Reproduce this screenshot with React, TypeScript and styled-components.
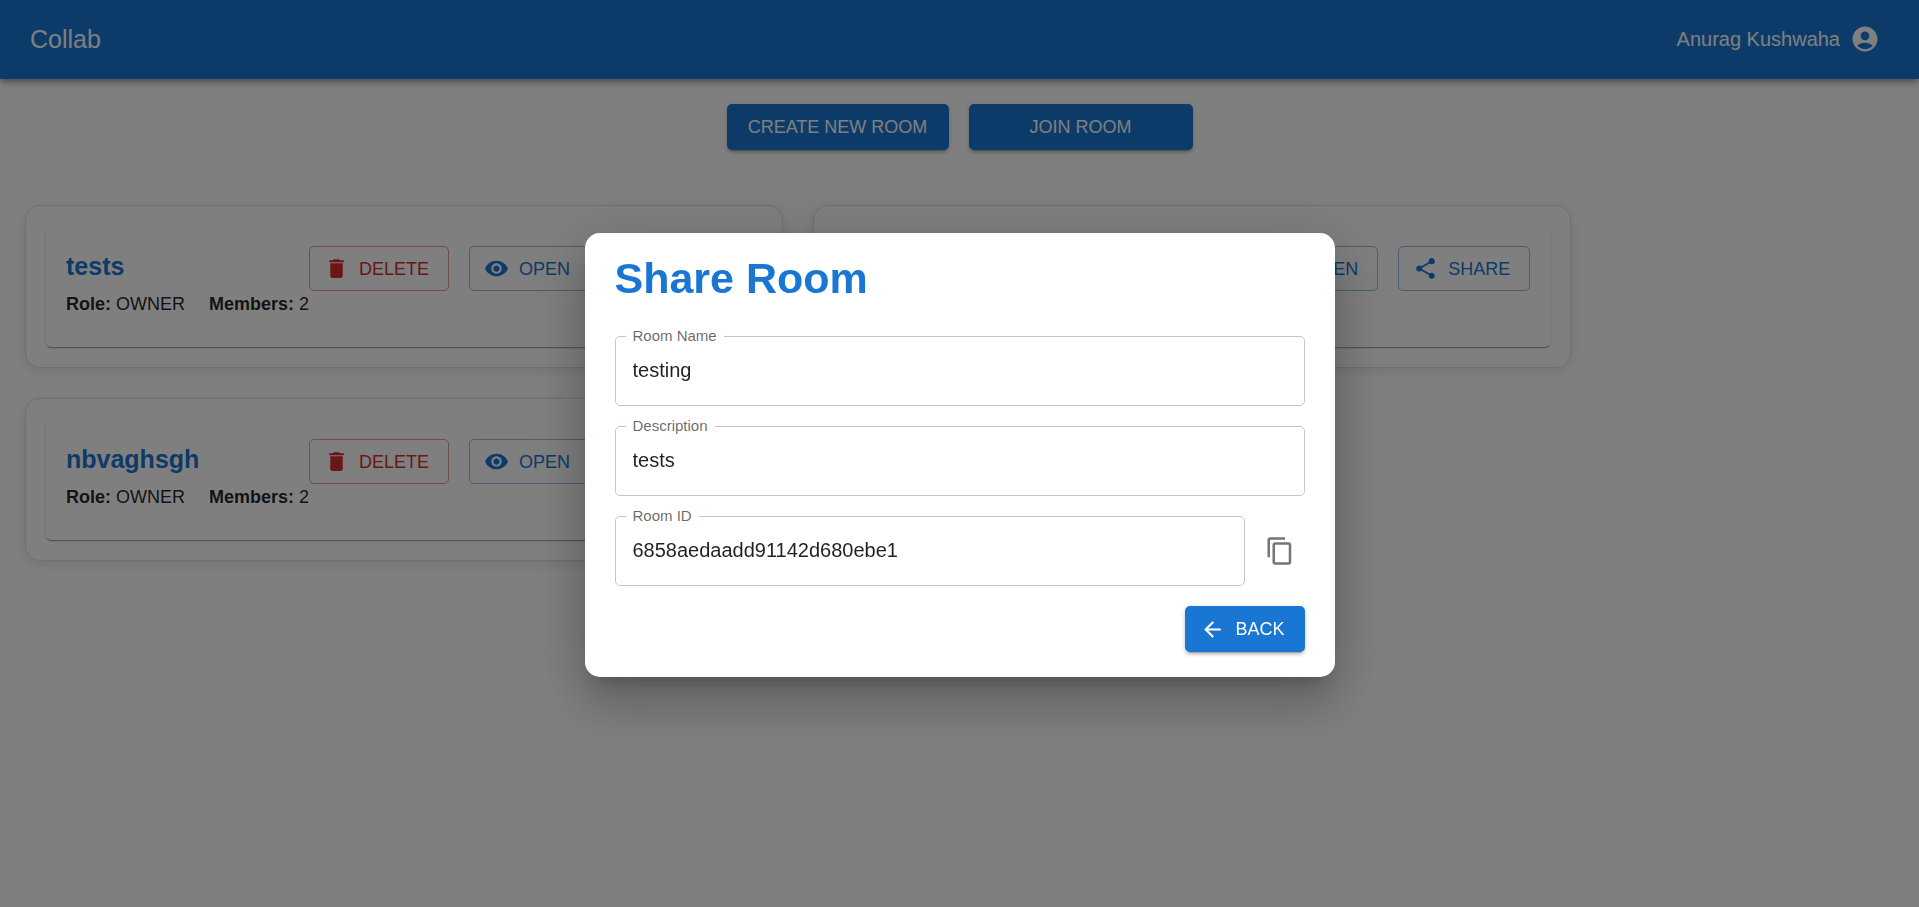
import React from 'react';
import styled, { createGlobalStyle } from 'styled-components';
import { MdArrowBack, MdContentCopy, MdDelete, MdShare, MdVisibility } from 'react-icons/md';

const GlobalStyle = createGlobalStyle`
  *, *::before, *::after { box-sizing: border-box; }
  body {
    margin: 0;
    background: #fff;
    color: rgba(0, 0, 0, 0.87);
    font-family: 'Liberation Sans', Arial, sans-serif;
    font-size: 20px;
  }
  h1, h2, h3, p { margin: 0; }
  button, input { font-family: inherit; }
`;

const TopBar = styled.header`
  display: flex;
  align-items: center;
  justify-content: space-between;
  height: 79px;
  padding: 0 39px 2px 30px;
  background: #1976d2;
  color: #fff;
  box-shadow: 0 3px 5px -1px rgba(0, 0, 0, 0.2), 0 5px 6px rgba(0, 0, 0, 0.14),
    0 1px 12px rgba(0, 0, 0, 0.12);
`;

const Brand = styled.h1`
  font-size: 25px;
  font-weight: 400;
  line-height: 40px;
`;

const UserButton = styled.button`
  display: flex;
  align-items: center;
  gap: 10px;
  padding: 0;
  border: 0;
  background: none;
  color: inherit;
  font-size: 20px;
  line-height: 30px;
`;

const Content = styled.main`
  padding: 25px;
`;

const PageActions = styled.div`
  display: flex;
  justify-content: center;
  gap: 20px;
  margin-bottom: 55px;
`;

const ContainedButton = styled.button<{ $minWidth?: number; $icon?: boolean }>`
  display: inline-flex;
  align-items: center;
  justify-content: center;
  gap: 10px;
  height: 46px;
  min-width: ${({ $minWidth }) => $minWidth ?? 0}px;
  padding: 0 20px 0 ${({ $icon }) => ($icon ? 15 : 20)}px;
  border: 0;
  border-radius: 5px;
  background: #1976d2;
  color: #fff;
  font-size: 18px;
  line-height: 30px;
  text-transform: uppercase;
  white-space: nowrap;
  box-shadow: 0 4px 1px -3px rgba(0, 0, 0, 0.2), 0 3px 3px rgba(0, 0, 0, 0.14),
    0 1px 6px rgba(0, 0, 0, 0.12);
`;

const RoomList = styled.section`
  display: flex;
  flex-wrap: wrap;
  gap: 30px;
`;

const RoomCard = styled.article`
  padding: 20px;
  border: 1px solid #e0e0e0;
  border-radius: 15px;
  background: #fff;
  box-shadow: 0 3px 12px rgba(0, 0, 0, 0.1);
`;

const RoomPanel = styled.div`
  display: flex;
  align-items: flex-start;
  justify-content: space-between;
  padding: 20px 20px 30px;
  border-radius: 5px;
  box-shadow: 0 2px 1px -1px rgba(0, 0, 0, 0.2), 0 1px 1px rgba(0, 0, 0, 0.14),
    0 1px 3px rgba(0, 0, 0, 0.12);
`;

const RoomTitle = styled.h2`
  margin-bottom: 6px;
  color: #1976d2;
  font-size: 25px;
  line-height: 40px;
`;

const RoomMeta = styled.div`
  display: flex;
  gap: 24px;
  font-size: 18px;
  line-height: 25px;
  white-space: nowrap;
`;

const RoomActions = styled.div`
  display: flex;
  gap: 20px;
`;

const OutlinedButton = styled.button<{ $danger?: boolean }>`
  display: inline-flex;
  align-items: center;
  gap: 10px;
  height: 45px;
  padding: 0 19px 0 14px;
  border: 1px solid ${({ $danger }) => ($danger ? 'rgba(211, 47, 47, 0.5)' : 'rgba(25, 118, 210, 0.5)')};
  border-radius: 5px;
  background: none;
  color: ${({ $danger }) => ($danger ? '#d32f2f' : '#1976d2')};
  font-size: 18px;
  line-height: 30px;
  text-transform: uppercase;
`;

const Backdrop = styled.div`
  position: fixed;
  inset: 0;
  display: flex;
  align-items: center;
  justify-content: center;
  padding-top: 3px;
  background: rgba(0, 0, 0, 0.5);
`;

const Dialog = styled.div`
  width: min(750px, 100%);
  padding: 20px 30px 25px;
  border-radius: 15px;
  background: #fff;
  box-shadow: 0 14px 19px -9px rgba(0, 0, 0, 0.2), 0 30px 48px 4px rgba(0, 0, 0, 0.14),
    0 11px 58px 10px rgba(0, 0, 0, 0.12);
`;

const DialogTitle = styled.h2`
  margin-bottom: 33px;
  color: #1976d2;
  font-size: 43px;
  line-height: 50px;
`;

const DialogForm = styled.form`
  display: flex;
  flex-direction: column;
  gap: 20px;
`;

const FieldRow = styled.div`
  display: flex;
  align-items: center;
  gap: 10px;
`;

const FieldBox = styled.div`
  position: relative;
  flex: 1;
`;

const FieldLabel = styled.label`
  position: absolute;
  top: -10px;
  left: 11px;
  padding: 0 7px;
  background: #fff;
  color: rgba(0, 0, 0, 0.6);
  font-size: 15px;
  line-height: 20px;
`;

const FieldInput = styled.input`
  display: block;
  width: 100%;
  height: 70px;
  padding: 0 17px 2px;
  border: 1px solid #c4c4c4;
  border-radius: 5px;
  outline: none;
  background: #fff;
  color: rgba(0, 0, 0, 0.87);
  font-size: 20px;
`;

const IconButton = styled.button`
  display: flex;
  padding: 10px;
  border: 0;
  border-radius: 50%;
  background: none;
  color: #757575;
`;

const DialogActions = styled.div`
  display: flex;
  justify-content: flex-end;
`;

const AccountIcon = () => (
  <svg width="30" height="30" viewBox="0 0 24 24" fill="currentColor" aria-hidden="true">
    <path d="M12 2C6.48 2 2 6.48 2 12s4.48 10 10 10 10-4.48 10-10S17.52 2 12 2m0 4c1.93 0 3.5 1.57 3.5 3.5S13.93 13 12 13s-3.5-1.57-3.5-3.5S10.07 6 12 6m0 14c-2.03 0-4.43-.82-6.14-2.88C7.55 15.8 9.68 15 12 15s4.45.8 6.14 2.12C16.43 19.18 14.03 20 12 20" />
  </svg>
);

const rooms = [
  { name: 'tests', role: 'OWNER', members: 2 },
  { name: 'testing', role: 'OWNER', members: 2 },
  { name: 'nbvaghsgh', role: 'OWNER', members: 2 },
];

const Room = ({ name, role, members }: { name: string; role: string; members: number }) => (
  <RoomCard>
    <RoomPanel>
      <div>
        <RoomTitle>{name}</RoomTitle>
        <RoomMeta>
          <p><strong>Role:</strong> {role}</p>
          <p><strong>Members:</strong> {members}</p>
        </RoomMeta>
      </div>
      <RoomActions>
        <OutlinedButton type="button" $danger><MdDelete size={25} />Delete</OutlinedButton>
        <OutlinedButton type="button"><MdVisibility size={25} />Open</OutlinedButton>
        <OutlinedButton type="button"><MdShare size={25} />Share</OutlinedButton>
      </RoomActions>
    </RoomPanel>
  </RoomCard>
);

const Field = ({ id, label, value }: { id: string; label: string; value: string }) => (
  <FieldBox>
    <FieldInput id={id} type="text" value={value} readOnly />
    <FieldLabel htmlFor={id}>{label}</FieldLabel>
  </FieldBox>
);

export default function App() {
  return (
    <>
      <GlobalStyle />
      <TopBar>
        <Brand>Collab</Brand>
        <UserButton type="button">Anurag Kushwaha<AccountIcon /></UserButton>
      </TopBar>
      <Content>
        <PageActions>
          <ContainedButton type="button" $minWidth={222}>Create new room</ContainedButton>
          <ContainedButton type="button" $minWidth={224}>Join room</ContainedButton>
        </PageActions>
        <RoomList>
          {rooms.map((room) => <Room key={room.name} {...room} />)}
        </RoomList>
      </Content>
      <Backdrop>
        <Dialog role="dialog" aria-modal="true" aria-labelledby="share-title">
          <DialogTitle id="share-title">Share Room</DialogTitle>
          <DialogForm>
            <FieldRow><Field id="room-name" label="Room Name" value="testing" /></FieldRow>
            <FieldRow><Field id="room-description" label="Description" value="tests" /></FieldRow>
            <FieldRow>
              <Field id="room-id" label="Room ID" value="6858aedaadd91142d680ebe1" />
              <IconButton type="button" aria-label="Copy room ID"><MdContentCopy size={30} /></IconButton>
            </FieldRow>
            <DialogActions>
              <ContainedButton type="button" $icon><MdArrowBack size={25} />Back</ContainedButton>
            </DialogActions>
          </DialogForm>
        </Dialog>
      </Backdrop>
    </>
  );
}
